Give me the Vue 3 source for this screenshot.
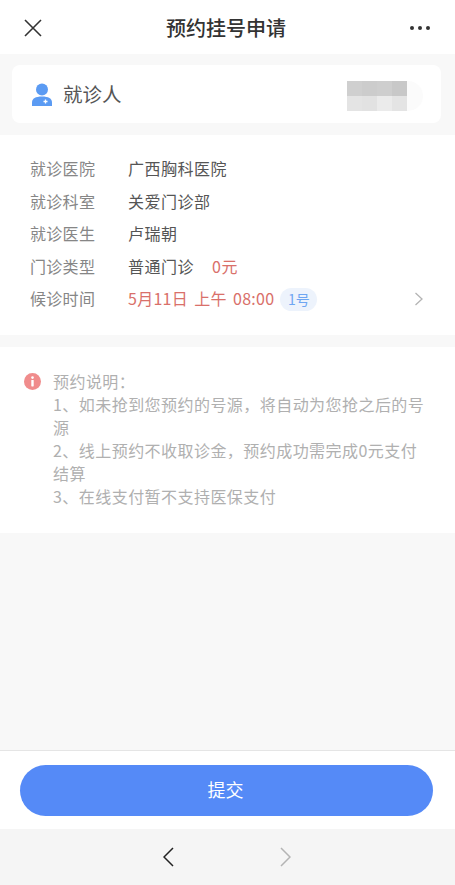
<script setup>
const rows = [
  { label: '就诊医院', value: '广西胸科医院' },
  { label: '就诊科室', value: '关爱门诊部' },
  { label: '就诊医生', value: '卢瑞朝' },
]
const mosaic = ['#cfcfcf', '#cccccc', '#cecece', '#c8c8c8', '#e4e4e4', '#e2e2e2', '#ebebeb', '#e4e4e4']
const notes = [
  '预约说明：',
  '1、如未抢到您预约的号源，将自动为您抢之后的号源',
  '2、线上预约不收取诊金，预约成功需完成0元支付结算',
  '3、在线支付暂不支持医保支付',
]
</script>

<template>
  <div class="page">
    <header class="nav">
      <svg class="close" width="20" height="20" viewBox="0 0 20 20">
        <path d="M2 2 L18 18 M18 2 L2 18" stroke="#333" stroke-width="1.6" fill="none" />
      </svg>
      <h1 class="title">预约挂号申请</h1>
      <div class="more"><i></i><i></i><i></i></div>
    </header>

    <main class="content">
      <section class="patient">
        <svg class="person" width="20" height="24" viewBox="0 0 20 24">
          <circle cx="10" cy="6.5" r="6" fill="#5b9bf3" />
          <path d="M0 23 V19.5 C0 15.5 3.5 13.5 10 13.5 C16.5 13.5 20 15.5 20 19.5 V23 Z" fill="#5b9bf3" />
          <path d="M11.5 18.5 h4 M13.5 16.5 v4" stroke="#fff" stroke-width="1.3" />
        </svg>
        <span class="patient-label">就诊人</span>
        <div class="pill">
          <div class="mosaic">
            <span v-for="(c, i) in mosaic" :key="i" :style="{ background: c }"></span>
          </div>
        </div>
      </section>

      <section class="info">
        <div v-for="r in rows" :key="r.label" class="row">
          <span class="label">{{ r.label }}</span>
          <span class="value">{{ r.value }}</span>
        </div>
        <div class="row">
          <span class="label">门诊类型</span>
          <span class="value">普通门诊</span>
          <span class="price">0元</span>
        </div>
        <div class="row">
          <span class="label">候诊时间</span>
          <span class="time">5月11日 上午 08:00</span>
          <span class="badge">1号</span>
          <svg class="arrow" width="10" height="14" viewBox="0 0 10 14">
            <path d="M1.5 1 L8 7 L1.5 13" stroke="#b4b4b4" stroke-width="1.3" fill="none" />
          </svg>
        </div>
      </section>

      <section class="notes">
        <svg class="alert" width="17" height="17" viewBox="0 0 17 17">
          <circle cx="8.5" cy="8.5" r="8.5" fill="#f08c8c" />
          <circle cx="8.5" cy="4.6" r="1.3" fill="#fff" />
          <rect x="7.3" y="7" width="2.4" height="6.4" rx="0.6" fill="#fff" />
        </svg>
        <div class="note-text">
          <p v-for="n in notes" :key="n">{{ n }}</p>
        </div>
      </section>
    </main>

    <footer class="footer">
      <button class="submit">提交</button>
    </footer>

    <div class="toolbar">
      <svg width="11" height="20" viewBox="0 0 11 20">
        <path d="M10 1 L1 10 L10 19" stroke="#222" stroke-width="1.5" fill="none" />
      </svg>
      <svg width="11" height="20" viewBox="0 0 11 20">
        <path d="M1 1 L10 10 L1 19" stroke="#b4b4b4" stroke-width="1.5" fill="none" />
      </svg>
    </div>
  </div>
</template>

<style scoped>
.page {
  width: 100%;
  height: 885px;
  display: flex;
  flex-direction: column;
  background: #f8f8f8;
  font-family: "Noto Sans CJK SC", "Liberation Sans", sans-serif;
  color: #333;
  overflow: hidden;
}
.nav {
  height: 54px;
  flex: none;
  background: #fff;
  display: flex;
  align-items: center;
  justify-content: space-between;
  padding: 0 25px 0 23px;
  position: relative;
}
.close {
  margin-top: 1px;
}
.title {
  position: absolute;
  left: 166px;
  top: 13px;
  margin: 0;
  font-size: 20px;
  line-height: 29px;
  font-weight: 500;
  color: #333;
}
.more {
  display: flex;
  gap: 4px;
  margin-top: 1px;
}
.more i {
  width: 4px;
  height: 4px;
  border-radius: 50%;
  background: #333;
}
.content {
  flex: 1;
  display: flex;
  flex-direction: column;
}
.patient {
  margin: 11px 14px 12px 12px;
  height: 58px;
  background: #fff;
  border-radius: 8px;
  display: flex;
  align-items: center;
  padding: 0 18px 0 20px;
}
.person {
  flex: none;
  margin-top: 1px;
}
.patient-label {
  margin-left: 11px;
  font-size: 19.5px;
  line-height: 28px;
  color: #555;
}
.pill {
  margin-left: auto;
  margin-top: 4px;
  width: 76px;
  height: 30px;
  border-radius: 15px;
  background: #fbfbfb;
  position: relative;
}
.mosaic {
  position: absolute;
  left: 0;
  top: 0;
  width: 60px;
  height: 30px;
  display: grid;
  grid-template-columns: repeat(4, 15px);
  grid-template-rows: repeat(2, 15px);
}
.info {
  background: #fff;
  height: 200px;
  box-sizing: border-box;
  padding: 18px 31px 0 30px;
}
.row {
  height: 32.5px;
  display: flex;
  align-items: center;
  font-size: 16px;
  line-height: 24px;
}
.row span {
  position: relative;
  top: -1px;
}
.label {
  width: 98px;
  flex: none;
  color: #868686;
  letter-spacing: 0.3px;
}
.value {
  color: #555;
  letter-spacing: 0.5px;
}
.price {
  margin-left: 18px;
  color: #d9706a;
  letter-spacing: 0.6px;
}
.time {
  color: #d9706a;
  letter-spacing: 0.25px;
  word-spacing: 2.5px;
}
.row .badge {
  top: 0;
  margin-left: 6px;
  width: 37px;
  height: 23px;
  border-radius: 12px;
  background: #edf3fc;
  color: #6ea6f2;
  font-size: 14px;
  line-height: 23px;
  text-align: center;
}
.arrow {
  margin-left: auto;
}
.notes {
  margin-top: 12px;
  background: #fff;
  height: 186px;
  box-sizing: border-box;
  padding: 26px 30px 0 24px;
  display: flex;
  align-items: flex-start;
}
.alert {
  flex: none;
}
.note-text {
  margin-left: 12px;
  margin-top: -3px;
  font-size: 16px;
  line-height: 23px;
  color: #b0b0b0;
  letter-spacing: 0.45px;
  width: 374px;
}
.note-text p {
  margin: 0;
}
.footer {
  flex: none;
  height: 79px;
  box-sizing: border-box;
  background: #fff;
  border-top: 1px solid #e5e5e5;
  padding: 14px 22px 0 20px;
}
.submit {
  display: block;
  width: 100%;
  height: 51px;
  border: none;
  border-radius: 26px;
  background: #558af7;
  color: #fff;
  font-family: inherit;
  font-size: 18px;
  padding: 0 2px 4px 0;
}
.toolbar {
  flex: none;
  height: 56px;
  background: #f5f5f5;
  display: flex;
  align-items: center;
  justify-content: center;
  gap: 106px;
  padding-right: 2px;
  box-sizing: border-box;
}
</style>
